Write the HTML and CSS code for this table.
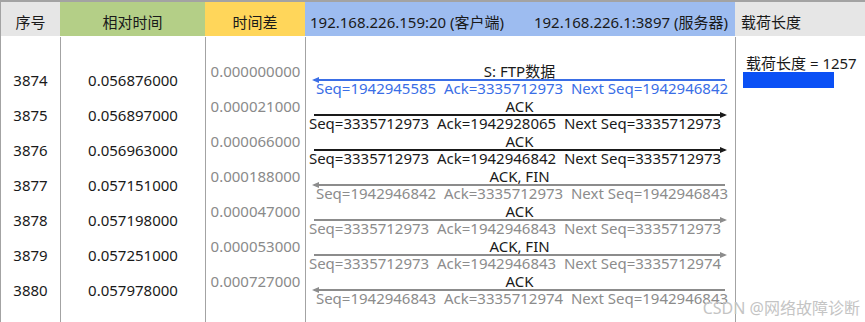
FILE: index.html
```html
<!DOCTYPE html>
<html lang="zh">
<head>
<meta charset="utf-8">
<title>TCP 流程图</title>
<link rel="stylesheet" href="styles.css">
</head>
<body>
<div class="sheet">
  <div class="cols head">
    <div class="h-no">序号</div>
    <div class="h-rel">相对时间</div>
    <div class="h-diff">时间差</div>
    <div class="h-flow"><span>192.168.226.159:20 (客户端)</span><span>192.168.226.1:3897 (服务器)</span></div>
    <div class="h-len">载荷长度</div>
  </div>
  <div class="cols body">
    <div class="col c-no">
      <div>3874</div><div>3875</div><div>3876</div><div>3877</div><div>3878</div><div>3879</div><div>3880</div>
    </div>
    <div class="col c-rel">
      <div>0.056876000</div><div>0.056897000</div><div>0.056963000</div><div>0.057151000</div><div>0.057198000</div><div>0.057251000</div><div>0.057978000</div>
    </div>
    <div class="col c-diff">
      <div>0.000000000</div><div>0.000021000</div><div>0.000066000</div><div>0.000188000</div><div>0.000047000</div><div>0.000053000</div><div>0.000727000</div>
    </div>
    <div class="col c-flow">
      <div class="msg l blue">
        <div class="lbl">S: FTP数据</div>
        <div class="arrow"></div>
        <div class="seq">Seq=1942945585  Ack=3335712973  Next Seq=1942946842</div>
      </div>
      <div class="msg r black">
        <div class="lbl">ACK</div>
        <div class="arrow"></div>
        <div class="seq">Seq=3335712973  Ack=1942928065  Next Seq=3335712973</div>
      </div>
      <div class="msg r black">
        <div class="lbl">ACK</div>
        <div class="arrow"></div>
        <div class="seq">Seq=3335712973  Ack=1942946842  Next Seq=3335712973</div>
      </div>
      <div class="msg l gray">
        <div class="lbl">ACK, FIN</div>
        <div class="arrow"></div>
        <div class="seq">Seq=1942946842  Ack=3335712973  Next Seq=1942946843</div>
      </div>
      <div class="msg r gray">
        <div class="lbl">ACK</div>
        <div class="arrow"></div>
        <div class="seq">Seq=3335712973  Ack=1942946843  Next Seq=3335712973</div>
      </div>
      <div class="msg r gray">
        <div class="lbl">ACK, FIN</div>
        <div class="arrow"></div>
        <div class="seq">Seq=3335712973  Ack=1942946843  Next Seq=3335712974</div>
      </div>
      <div class="msg l gray">
        <div class="lbl">ACK</div>
        <div class="arrow"></div>
        <div class="seq">Seq=1942946843  Ack=3335712974  Next Seq=1942946843</div>
      </div>
    </div>
    <div class="col c-len">
      <div class="len-text">载荷长度 = 1257</div>
      <div class="bar"></div>
    </div>
  </div>
  <div class="wm">CSDN @网络故障诊断</div>
</div>
</body>
</html>
```

FILE: styles.css
```css
* { box-sizing: border-box; margin: 0; padding: 0; }
html, body { width: 865px; height: 322px; overflow: hidden; background: #fff; }
body {
  font-family: "Noto Sans", "Noto Sans CJK SC", sans-serif;
  font-size: 15px;
  color: #1a1a1a;
}
.sheet {
  position: relative;
  height: 322px;
  border-top: 2px solid #a3a3a3;
  border-left: 1px solid #a3a3a3;
  display: flex;
  flex-direction: column;
}
.cols { display: grid; grid-template-columns: 59px 145px 100px 430px 1fr; }

.head { height: 34px; flex: none; }
.head > div { padding-top: 6px; line-height: 28px; text-align: center; white-space: nowrap; }
.h-no, .h-len { background: #e6e6e6; }
.h-len { text-align: left !important; padding-left: 6px; }
.h-rel { background: #b4cf87; }
.h-diff { background: #ffd65a; }
.h-flow {
  background: #9dbcf0;
  display: flex;
  justify-content: space-between;
  padding: 6px 7px 0 5px;
}

.body { flex: 1; margin-top: 1px; }
.col + .col { border-left: 1px solid #a3a3a3; }

.c-no, .c-rel { padding-top: 26px; text-align: center; }
.c-no > div, .c-rel > div, .c-diff > div { line-height: 35px; }
.c-diff { padding-top: 17px; text-align: center; color: #8a8a8a; }

.c-flow { padding-top: 27px; }
.msg { height: 35px; }
.msg .lbl { line-height: 15px; text-align: center; margin: 0 10px 0 8px; color: #1a1a1a; white-space: nowrap; }
.msg .arrow {
  position: relative;
  height: 2px;
  margin: 0 10px 0 8px;
  background: currentColor;
}
.msg.r .arrow::after, .msg.l .arrow::after {
  content: "";
  position: absolute;
  top: -2px;
  border-top: 3px solid transparent;
  border-bottom: 3px solid transparent;
}
.msg.r .arrow::after { right: -2px; border-left: 7px solid currentColor; }
.msg.l .arrow::after { left: -2px; border-right: 7px solid currentColor; }
.msg .seq { line-height: 14px; white-space: pre; text-align: center; }
.msg.r .seq { padding-right: 11px; }
.msg.l .seq { padding-left: 3px; }
.blue { color: #3a6ee6; }
.gray { color: #8c8c8c; }
.black { color: #1a1a1a; }

.c-len { padding: 18px 0 0 7px; }
.len-text { line-height: 16px; padding-left: 3px; white-space: nowrap; }
.bar { width: 91px; height: 16px; margin-top: 1px; background: #0a50f5; }

.wm {
  position: absolute;
  right: 5px;
  bottom: 5px;
  font-size: 16px;
  line-height: 18px;
  color: #c4c4c4;
  white-space: nowrap;
}
```
